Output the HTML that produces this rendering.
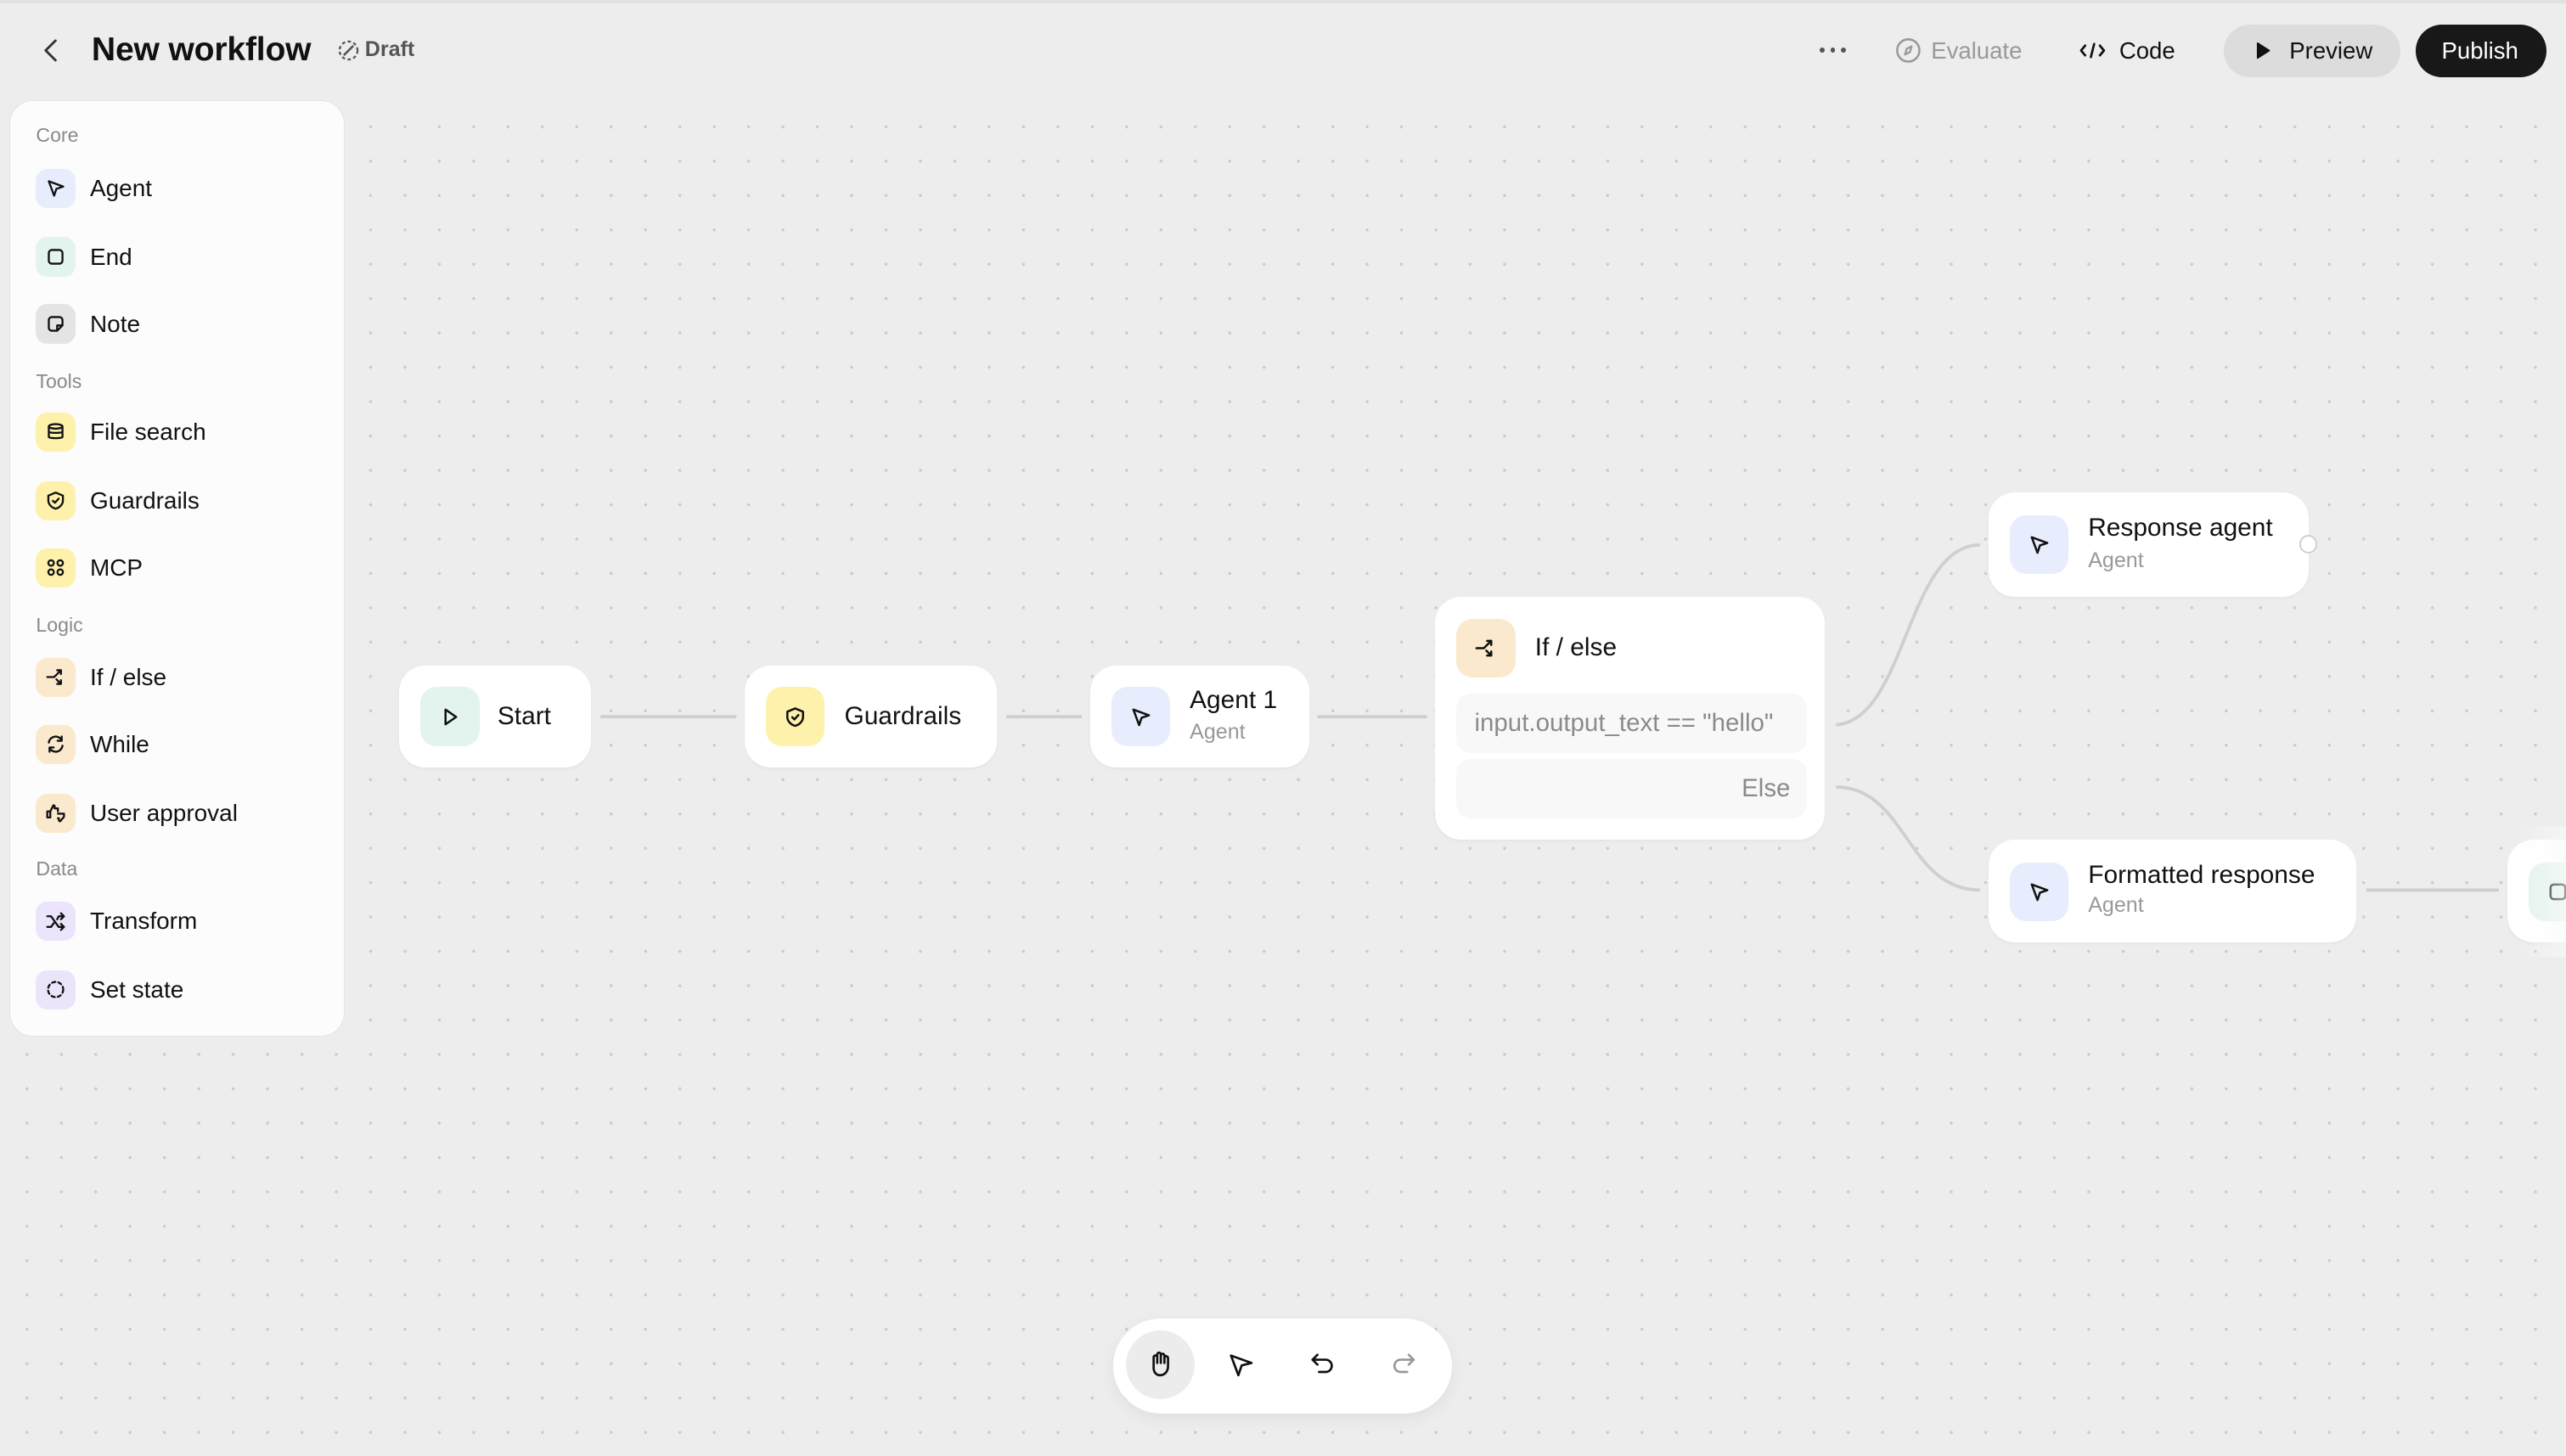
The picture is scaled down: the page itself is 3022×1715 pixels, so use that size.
<!DOCTYPE html>
<html><head><meta charset="utf-8">
<style>
html,body{margin:0;padding:0;}
body{width:3022px;height:1714px;overflow:hidden;background:#ededed;font-family:"Liberation Sans",sans-serif;color:#111;}
#w{position:relative;width:1568px;height:890px;zoom:1.92730;overflow:hidden;
background-color:#ededed;
background-image:radial-gradient(circle,#c9c9c9 0.7px,transparent 1.1px);
background-size:21px 21px;background-position:6px 4px;}
.abs{position:absolute;}
.hdr{position:absolute;left:0;top:0;width:1568px;height:62px;}
.side{position:absolute;left:6px;top:62px;width:204px;height:571px;background:#fcfcfc;border-radius:14px;box-shadow:0 0 0 0.5px #e4e4e4;}
.sec{position:absolute;left:16px;font-size:12px;color:#8a8a8a;}
.it{position:absolute;left:16px;height:24px;display:flex;align-items:center;font-size:14.5px;color:#111;}
.ic{width:24px;height:24px;border-radius:7px;display:flex;align-items:center;justify-content:center;margin-right:9px;}
.ic svg{width:13px;height:13px;fill:none;stroke:#111;stroke-width:1.3;stroke-linecap:round;stroke-linejoin:round;}
.node{position:absolute;background:#fff;border-radius:16px;box-shadow:0 1px 2px rgba(0,0,0,0.04);}
.nic{position:absolute;left:13px;top:13px;width:36px;height:36px;border-radius:10px;display:flex;align-items:center;justify-content:center;}
.nic svg{width:14px;height:14px;fill:none;stroke:#111;stroke-width:1.3;stroke-linecap:round;stroke-linejoin:round;}
.nt{position:absolute;font-size:15.5px;color:#111;}
.ns{position:absolute;font-size:13px;color:#999;}
.blue{background:#e8edfd}.green{background:#e3f3ee}.yel{background:#fdf1ac}.org{background:#fbe9cd}.pur{background:#ebe4fb}.gray{background:#e4e4e4}
</style></head><body><div id="w">
<div class="hdr" style="background:#ededed"></div>
<div class="abs" style="left:0;top:0;width:1568px;height:2px;background:#e2e2e2"></div>
<svg class="abs" style="left:25px;top:23px" width="14" height="16" viewBox="0 0 14 16"><path d="M9 2 L3 8 L9 14" fill="none" stroke="#333" stroke-width="1.5" stroke-linecap="round" stroke-linejoin="round"/></svg>
<div class="abs" style="left:56px;top:19px;font-size:20.3px;font-weight:bold;color:#111;letter-spacing:-0.1px">New workflow</div>
<svg class="abs" style="left:206px;top:24px" width="14" height="14" viewBox="0 0 14 14"><circle cx="7" cy="7" r="5.5" fill="none" stroke="#555" stroke-width="1.2" stroke-dasharray="2 1.6"/><path d="M4.5 9.5 L9.5 4.5" stroke="#555" stroke-width="1.4" stroke-linecap="round"/></svg>
<div class="abs" style="left:223px;top:23px;font-size:13px;color:#555;font-weight:bold">Draft</div>

<div class="abs" style="left:1112px;top:29px;width:16px;height:4px;display:flex;justify-content:space-between"><i style="width:3px;height:3px;border-radius:2px;background:#555"></i><i style="width:3px;height:3px;border-radius:2px;background:#555"></i><i style="width:3px;height:3px;border-radius:2px;background:#555"></i></div>
<svg class="abs" style="left:1158px;top:23px" width="16" height="16" viewBox="0 0 16 16"><circle cx="8" cy="8" r="6.8" fill="none" stroke="#999" stroke-width="1.3"/><path d="M10 5.5 L9 9 L6 10.5 L7 7 Z" fill="none" stroke="#999" stroke-width="1.2" stroke-linejoin="round"/></svg>
<div class="abs" style="left:1180px;top:23px;font-size:14.3px;color:#999">Evaluate</div>
<svg class="abs" style="left:1270px;top:24px" width="17" height="14" viewBox="0 0 17 14"><path d="M4 4 L1.5 7 L4 10 M13 4 L15.5 7 L13 10 M9.5 3 L7.5 11" fill="none" stroke="#111" stroke-width="1.4" stroke-linecap="round" stroke-linejoin="round"/></svg>
<div class="abs" style="left:1295px;top:23px;font-size:14.3px;color:#111">Code</div>
<div class="abs" style="left:1359px;top:15px;width:108px;height:32px;border-radius:16px;background:#dcdcdc"></div>
<svg class="abs" style="left:1378px;top:25px" width="10" height="12" viewBox="0 0 10 12"><path d="M1.5 1.5 L8.5 6 L1.5 10.5 Z" fill="#111" stroke="#111" stroke-width="1" stroke-linejoin="round"/></svg>
<div class="abs" style="left:1399px;top:23px;font-size:14.3px;color:#111">Preview</div>
<div class="abs" style="left:1476px;top:15px;width:80px;height:32px;border-radius:16px;background:#181818"></div>
<div class="abs" style="left:1492px;top:23px;font-size:14.3px;color:#fff">Publish</div>

<div class="side">
<div class="sec" style="top:14px">Core</div>
<div class="it" style="top:41px"><div class="ic blue"><svg viewBox="0 0 14 14"><path d="M2.5 2.5 L12 6 L7.5 7.5 L6 12 Z"/></svg></div>Agent</div>
<div class="it" style="top:83px"><div class="ic green"><svg viewBox="0 0 14 14"><rect x="2.5" y="2.5" width="9" height="9" rx="2"/></svg></div>End</div>
<div class="it" style="top:124px"><div class="ic gray"><svg viewBox="0 0 14 14"><path d="M11.5 8 V4.5 A2 2 0 0 0 9.5 2.5 H4.5 A2 2 0 0 0 2.5 4.5 V9.5 A2 2 0 0 0 4.5 11.5 H8 Z M8 11.5 V8 H11.5"/></svg></div>Note</div>
<div class="sec" style="top:164px">Tools</div>
<div class="it" style="top:190px"><div class="ic yel"><svg viewBox="0 0 14 14"><ellipse cx="7" cy="3.5" rx="4.5" ry="1.5"/><path d="M2.5 3.5 V10.5 C2.5 11.5 11.5 11.5 11.5 10.5 V3.5 M2.5 7 C2.5 8 11.5 8 11.5 7"/></svg></div>File search</div>
<div class="it" style="top:232px"><div class="ic yel"><svg viewBox="0 0 14 14"><path d="M7 1.8 L11.8 3.8 V7 C11.8 10 9 12 7 12.4 C5 12 2.2 10 2.2 7 V3.8 Z M5.2 7.2 L6.5 8.5 L9 5.8"/></svg></div>Guardrails</div>
<div class="it" style="top:273px"><div class="ic yel"><svg viewBox="0 0 14 14"><circle cx="4" cy="4" r="1.8"/><circle cx="10" cy="4" r="1.8"/><circle cx="4" cy="10" r="1.8"/><circle cx="10" cy="10" r="1.8"/></svg></div>MCP</div>
<div class="sec" style="top:313px">Logic</div>
<div class="it" style="top:340px"><div class="ic org"><svg viewBox="0 0 14 14"><path d="M1.5 7 H6 L10.5 2.5 M8 2.5 H10.5 V5 M7.5 8.5 L10.5 11.5 M10.5 9 V11.5 H8"/></svg></div>If / else</div>
<div class="it" style="top:381px"><div class="ic org"><svg viewBox="0 0 14 14"><path d="M2.5 6 A4.5 4.5 0 0 1 11 4.5 M11 2 V4.8 H8.3 M11.5 8 A4.5 4.5 0 0 1 3 9.5 M3 12 V9.2 H5.7"/></svg></div>While</div>
<div class="it" style="top:423px"><div class="ic org"><svg viewBox="0 0 14 14"><path d="M1.5 6 H3.5 V10 H1.5 Z M3.5 6 L5.5 2 C6.5 2 6.5 3 6.3 4 H8.5 V6 M8.5 7.5 H12.5 V9.5 L10 12.5 C9 12.5 9 11.5 9.2 10.5 H8.5"/></svg></div>User approval</div>
<div class="sec" style="top:462px">Data</div>
<div class="it" style="top:489px"><div class="ic pur"><svg viewBox="0 0 14 14"><path d="M1.5 3.5 H4 L9 10.5 H12.5 M1.5 10.5 H4 L5.8 8 M8 5.5 L9 3.5 H12.5 M10.5 1.5 L12.5 3.5 L10.5 5.5 M10.5 8.5 L12.5 10.5 L10.5 12.5"/></svg></div>Transform</div>
<div class="it" style="top:531px"><div class="ic pur"><svg viewBox="0 0 14 14"><circle cx="7" cy="7" r="5" stroke-dasharray="2.2 2"/></svg></div>Set state</div>
</div>

<svg class="abs" style="left:0;top:0" width="1568" height="889">
<g fill="none" stroke="#cfcfcf" stroke-width="2">
<path d="M367 438 H450"/>
<path d="M615 438 H661"/>
<path d="M805 438 H872"/>
<path d="M1122 443 C1165 440 1165 333 1210 333"/>
<path d="M1122 481 C1165 481 1165 544 1210 544"/>
<path d="M1446 544 H1527"/>
</g>
</svg>

<div class="node" style="left:244px;top:407px;width:117px;height:62px"><div class="nic green"><svg viewBox="0 0 14 14"><path d="M4 2.5 L10.5 7 L4 11.5 Z"/></svg></div><div class="nt" style="left:60px;top:22px">Start</div></div>
<div class="node" style="left:455px;top:407px;width:154px;height:62px"><div class="nic yel"><svg viewBox="0 0 14 14"><path d="M7 1.8 L11.8 3.8 V7 C11.8 10 9 12 7 12.4 C5 12 2.2 10 2.2 7 V3.8 Z M5.2 7.2 L6.5 8.5 L9 5.8"/></svg></div><div class="nt" style="left:61px;top:22px">Guardrails</div></div>
<div class="node" style="left:666px;top:407px;width:134px;height:62px"><div class="nic blue"><svg viewBox="0 0 14 14"><path d="M2.5 2.5 L12 6 L7.5 7.5 L6 12 Z"/></svg></div><div class="nt" style="left:61px;top:12px">Agent 1</div><div class="ns" style="left:61px;top:33px">Agent</div></div>

<div class="node" style="left:877px;top:365px;width:238px;height:148px">
<div class="nic org"><svg viewBox="0 0 14 14"><path d="M1.5 7 H6 L10.5 2.5 M8 2.5 H10.5 V5 M7.5 8.5 L10.5 11.5 M10.5 9 V11.5 H8"/></svg></div>
<div class="nt" style="left:61px;top:22px">If / else</div>
<div class="abs" style="left:13px;top:59px;width:214px;height:36px;border-radius:9px;background:#f8f8f8"></div>
<div class="abs" style="left:24px;top:68px;font-size:15.3px;color:#8a8a8a">input.output_text == "hello"</div>
<div class="abs" style="left:13px;top:99px;width:214px;height:36px;border-radius:9px;background:#f8f8f8"></div>
<div class="abs" style="right:21px;top:108px;font-size:15.3px;color:#8a8a8a">Else</div>
</div>

<div class="node" style="left:1215px;top:301px;width:196px;height:64px"><div class="nic blue" style="top:14px"><svg viewBox="0 0 14 14"><path d="M2.5 2.5 L12 6 L7.5 7.5 L6 12 Z"/></svg></div><div class="nt" style="left:61px;top:13px">Response agent</div><div class="ns" style="left:61px;top:34px">Agent</div></div>
<div class="abs" style="left:1405px;top:327px;width:9px;height:9px;border-radius:50%;background:#fff;border:1.5px solid #d0d0d0"></div>
<div class="node" style="left:1215px;top:513px;width:225px;height:63px"><div class="nic blue" style="top:14px"><svg viewBox="0 0 14 14"><path d="M2.5 2.5 L12 6 L7.5 7.5 L6 12 Z"/></svg></div><div class="nt" style="left:61px;top:13px">Formatted response</div><div class="ns" style="left:61px;top:33px">Agent</div></div>
<div class="node" style="left:1532px;top:513px;width:80px;height:63px"><div class="nic green" style="top:14px"><svg viewBox="0 0 14 14"><rect x="2.5" y="2.5" width="9" height="9" rx="2"/></svg></div></div>
<div class="abs" style="left:1540px;top:505px;width:28px;height:80px;background:linear-gradient(90deg,rgba(255,255,255,0),rgba(250,250,250,0.6))"></div>

<div class="abs" style="left:680px;top:806px;width:207px;height:58px;border-radius:29px;background:#fff;box-shadow:0 3px 10px rgba(0,0,0,0.06)"></div>
<div class="abs" style="left:688px;top:813px;width:42px;height:42px;border-radius:50%;background:#ececec"></div>
<svg class="abs" style="left:700px;top:825px" width="18" height="18" viewBox="0 0 18 18" fill="none" stroke="#111" stroke-width="1.4" stroke-linecap="round" stroke-linejoin="round"><path d="M5 9 V4.5 A1.1 1.1 0 0 1 7.2 4.5 V8 M7.2 4 V2.8 A1.1 1.1 0 0 1 9.4 2.8 V8 M9.4 3.5 A1.1 1.1 0 0 1 11.6 3.5 V8 M11.6 5 A1.1 1.1 0 0 1 13.8 5 V10 C13.8 13.5 11.5 15.5 9 15.5 C6.5 15.5 5 13.5 5 11 V9"/></svg>
<svg class="abs" style="left:749px;top:825px" width="18" height="18" viewBox="0 0 18 18" fill="none" stroke="#111" stroke-width="1.4" stroke-linejoin="round"><path d="M3 3.5 L15.5 8 L9.5 9.5 L7.5 15.5 Z"/></svg>
<svg class="abs" style="left:799px;top:825px" width="18" height="18" viewBox="0 0 18 18" fill="none" stroke="#111" stroke-width="1.4" stroke-linecap="round" stroke-linejoin="round"><path d="M6 3 L3 6 L6 9 M3 6 H11 A3.7 3.7 0 0 1 11 13.5 H7"/></svg>
<svg class="abs" style="left:849px;top:825px" width="18" height="18" viewBox="0 0 18 18" fill="none" stroke="#999" stroke-width="1.4" stroke-linecap="round" stroke-linejoin="round"><path d="M12 3 L15 6 L12 9 M15 6 H7 A3.7 3.7 0 0 0 7 13.5 H11"/></svg>
</div></body></html>
